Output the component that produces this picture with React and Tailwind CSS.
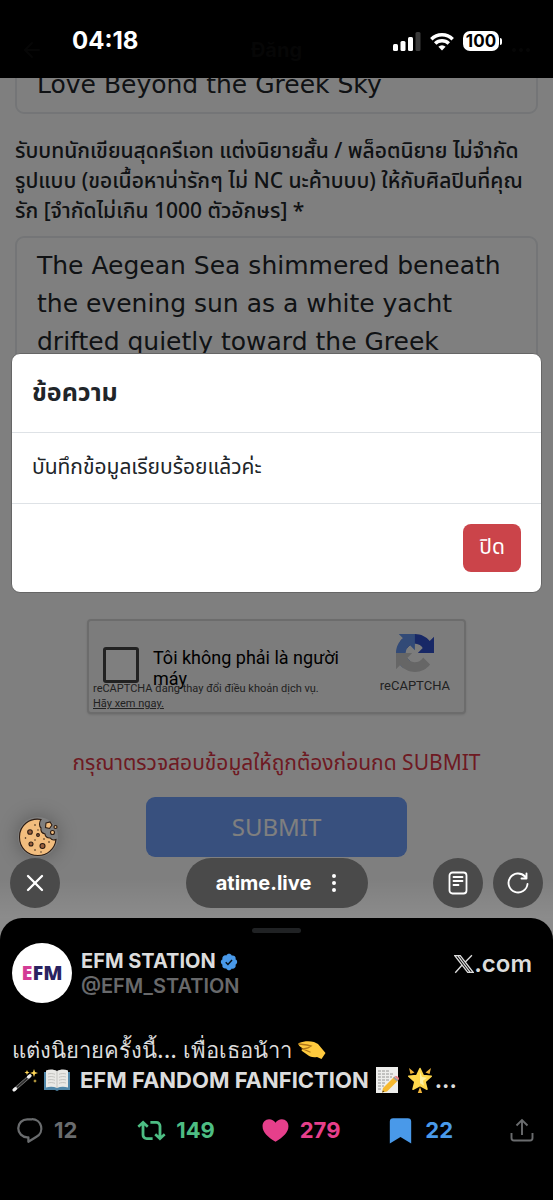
import React, { useState } from 'react';
import { ArrowLeft, MoreHorizontal, MoreVertical, X } from 'lucide-react';

const pageFont = 'font-["DejaVu_Sans","Noto_Sans",sans-serif]';
const thaiFont = 'font-["Noto_Sans_Thai","Noto_Sans","DejaVu_Sans",sans-serif]';

const StatusBar = () => (
  <header className="relative h-[78px] shrink-0 bg-black text-white">
    {/* Title bar under the status icons, nearly hidden */}
    <div className="absolute inset-x-0 top-9 flex items-center justify-between px-5 text-[#060606]">
      <ArrowLeft className="h-6 w-6" />
      <span className="text-xl font-bold">Đăng</span>
      <MoreHorizontal className="h-6 w-6" />
    </div>
    <div className="relative flex items-center justify-between pl-[72px] pr-[51px] pt-[26px]">
      <span className="text-[24px] font-bold leading-[30px]">04:18</span>
      <div className="flex items-center gap-[9px]">
        <svg viewBox="0 0 28 19" className="h-[19px] w-7" fill="currentColor">
          <rect x="0" y="12" width="5" height="7" rx="1.5" />
          <rect x="7.5" y="9" width="5" height="10" rx="1.5" />
          <rect x="15" y="5" width="5" height="14" rx="1.5" />
          <rect x="22.5" y="0" width="5" height="19" rx="1.5" fill="#3a3a3a" />
        </svg>
        <svg viewBox="0 0 24 19" className="h-[19px] w-6" fill="none" stroke="currentColor" strokeWidth="3.4">
          <path d="M1.3 7.2a15.2 15.2 0 0 1 21.4 0" />
          <path d="M5.2 11.5a9.6 9.6 0 0 1 13.6 0" />
          <path d="M12 18.6 8.4 14.8a5 5 0 0 1 7.2 0Z" fill="currentColor" stroke="none" />
        </svg>
        <div className="flex items-center gap-px">
          <span className="flex h-5 w-9 items-center justify-center rounded-[7px] bg-white text-[17px] font-bold leading-5 text-black">100</span>
          <span className="h-[7px] w-[2px] rounded-r bg-white" />
        </div>
      </div>
    </div>
  </header>
);

const RecaptchaLogo = () => (
  <svg viewBox="0 0 64 64" className="h-[38px] w-[38px]">
    <path fill="#3050cc" d="M64 31.955l-.033-1.37V4.687l-7.16 7.16C50.948 4.674 42.033.093 32.05.093c-10.4 0-19.622 4.96-25.458 12.64l11.736 11.86a15.55 15.55 0 0 1 4.754-5.334c2.05-1.6 4.952-2.906 8.968-2.906.485 0 .86.057 1.135.163 4.976.393 9.288 3.14 11.828 7.124l-8.307 8.307L64 31.953" />
    <path fill="#6494ee" d="M31.862.094l-1.37.033H4.594l7.16 7.16C4.58 13.147 0 22.06 0 32.046c0 10.4 4.96 19.622 12.64 25.458L24.5 45.768a15.55 15.55 0 0 1-5.334-4.754c-1.6-2.05-2.906-4.952-2.906-8.968 0-.485.057-.86.163-1.135.393-4.976 3.14-9.288 7.124-11.828l8.307 8.307L31.86.095" />
    <path fill="#cccccc" d="M.001 32.045l.033 1.37v25.898l7.16-7.16c5.86 7.173 14.774 11.754 24.76 11.754 10.4 0 19.622-4.96 25.458-12.64l-11.736-11.86a15.55 15.55 0 0 1-4.754 5.334c-2.05 1.6-4.952 2.906-8.968 2.906-.485 0-.86-.057-1.135-.163-4.976-.393-9.288-3.14-11.828-7.124l8.307-8.307c-10.522.04-22.4.066-27.295-.005" />
  </svg>
);

const Recaptcha = () => (
  <div className="relative mx-auto flex h-[95px] w-[379px] items-start rounded-[4px] border-2 border-[#d9d9d9] bg-[#f9f9f9] pl-[14px] pt-[26px] font-['Roboto',sans-serif] shadow">
    <input id="not-robot" type="checkbox" className="h-9 w-9 shrink-0 appearance-none rounded-[3px] border-[3px] border-[#444] bg-white" />
    <label htmlFor="not-robot" className="ml-[14px] w-[200px] text-[18px] leading-[21px] text-black">
      Tôi không phải là người máy
    </label>
    <div className="-mt-[13px] ml-auto mr-[14px] flex flex-col items-center">
      <RecaptchaLogo />
      <span className="mt-1 text-[13px] leading-5 text-[#444]">reCAPTCHA</span>
    </div>
    <p className="absolute left-1 top-[60px] text-[11px] leading-[15px] text-[#444]">
      reCAPTCHA đang thay đổi điều khoản dịch vụ.
      <br />
      <a href="#terms" className="underline">Hãy xem ngay.</a>
    </p>
  </div>
);

const FanficForm = () => (
  <form className={`flex flex-col px-[15px] text-[#212529] ${pageFont}`} onSubmit={(e) => e.preventDefault()}>
    <input
      aria-label="Title"
      defaultValue="Love Beyond the Greek Sky"
      className="-mt-6 h-[60px] w-full rounded-[9px] border-2 border-[#e8ebee] bg-white px-5 text-[25px]"
    />
    <label htmlFor="story" className={`mt-[23px] whitespace-nowrap text-[21px] font-medium leading-[30px] ${thaiFont}`}>
      รับบทนักเขียนสุดครีเอท แต่งนิยายสั้น / พล็อตนิยาย ไม่จำกัด
      <br />
      รูปแบบ (ขอเนื้อหาน่ารักๆ ไม่ NC นะค้าบบบ) ให้กับศิลปินที่คุณ
      <br />
      รัก [จำกัดไม่เกิน 1000 ตัวอักษร] *
    </label>
    <textarea
      id="story"
      defaultValue={'The Aegean Sea shimmered beneath\nthe evening sun as a white yacht\ndrifted quietly toward the Greek'}
      className="mt-[9px] h-[353px] w-full resize-none rounded-[9px] border-2 border-[#e8ebee] bg-white px-5 py-[9px] text-[25px] leading-[38px]"
    />
    <div className="mt-[30px]">
      <Recaptcha />
    </div>
    <p className={`mt-[35px] text-center text-[21px] leading-[30px] text-[#dc3545] ${thaiFont}`}>
      กรุณาตรวจสอบข้อมูลให้ถูกต้องก่อนกด SUBMIT
    </p>
    <button type="submit" className={`mx-auto mt-[18px] h-[60px] w-1/2 rounded-[9px] bg-[#70a0fc] pt-1 text-[24px] text-white ${thaiFont}`}>
      SUBMIT
    </button>
  </form>
);

const MessageDialog = ({ onClose }) => (
  <div className="absolute inset-0 flex items-center bg-black/50 px-[11px] pb-[50px]">
    <div role="dialog" aria-labelledby="dialog-title" className={`w-full rounded-[9px] border border-[#666] bg-white text-[#212529] ${thaiFont}`}>
      <h5 id="dialog-title" className="border-b border-[#dee2e6] px-5 py-[21px] text-[25px] font-bold leading-9">ข้อความ</h5>
      <p className="px-5 py-5 text-[21px] leading-[30px]">บันทึกข้อมูลเรียบร้อยแล้วค่ะ</p>
      <div className="flex justify-end border-t border-[#dee2e6] p-5">
        <button onClick={onClose} className="h-12 w-[58px] rounded-[8px] bg-[#cb444a] text-[21px] text-white">ปิด</button>
      </div>
    </div>
  </div>
);

const CookieIcon = () => (
  <svg viewBox="0 0 40 40" className="h-10 w-10" stroke="#2b1c14" strokeWidth="1.1">
    <path fill="#f2bd7e" d="M23 2.500C12 .5 1.500 8 1.500 20c0 11 8 18.500 18.500 18.500 9 0 17-6.500 18-16-2 .8-4.500.3-5.800-1.500-3 .3-5-1.500-5.200-4-3.500-1-4.500-3.500-4-6-2-2-2-6 0-8.500Z" />
    <g fill="#9a603d">
      <circle cx="12" cy="15" r="2.300" />
      <circle cx="20" cy="18" r="1.400" />
      <circle cx="13" cy="27" r="2" />
      <circle cx="24.500" cy="29" r="2.500" />
    </g>
    <g fill="#f2bd7e">
      <path d="m28 6 4-1 2 3-2.500 3.500-4-1Z" />
      <circle cx="34.500" cy="15.500" r="2" />
      <circle cx="37.500" cy="10" r="1.500" />
    </g>
    <g fill="#2b1c14" stroke="none">
      <circle cx="17" cy="8" r=".8" />
      <circle cx="20" cy="13" r=".7" />
      <circle cx="7.500" cy="21" r=".8" />
      <circle cx="17" cy="23" r=".7" />
      <circle cx="26" cy="22" r=".8" />
      <circle cx="31" cy="25" r=".8" />
      <circle cx="17" cy="33" r=".8" />
      <circle cx="23" cy="35" r=".7" />
    </g>
  </svg>
);

const roundButton = 'flex h-[50px] w-[50px] shrink-0 items-center justify-center rounded-full bg-[#4a4a4a]';

const BrowserBar = () => (
  <nav className="absolute inset-x-0 bottom-[10px] flex items-center justify-between px-[10px] text-white">
    <button aria-label="Close" className={roundButton}>
      <X className="h-7 w-7" strokeWidth={2} />
    </button>
    <button className="ml-[61px] flex h-[50px] w-[182px] items-center justify-center gap-[11px] rounded-full bg-[#4a4a4a] pl-2 text-[20px] font-bold">
      atime.live
      <MoreVertical className="h-6 w-6" strokeWidth={2} />
    </button>
    <div className="flex gap-[10px]">
      <button aria-label="Reader" className={roundButton}>
        <svg viewBox="0 0 24 24" className="h-6 w-6" fill="none" stroke="currentColor" strokeWidth="1.8" strokeLinecap="round">
          <rect x="3.500" y="1.500" width="17" height="21" rx="3" />
          <path d="M7.500 6h9M7.500 10h9M7.500 14h5" />
        </svg>
      </button>
      <button aria-label="Reload" className={roundButton}>
        <svg viewBox="0 0 24 24" className="h-6 w-6" fill="none" stroke="currentColor" strokeWidth="1.9" strokeLinecap="round" strokeLinejoin="round">
          <path d="M21.500 13A9.500 9.500 0 1 1 19 5.500l1.500 2M20.500 2.500v5h-5" />
        </svg>
      </button>
    </div>
  </nav>
);

const HandEmoji = () => (
  <svg viewBox="0 0 28 20" className="h-5 w-7">
    <path fill="#ffca3e" d="M1 3c5-2 10-2.500 15-1l4 2 7.500 9-4 6-4.500-2c-4 1-8-.5-10-2.500L4 11c-1-1 0-2.500 1.500-2L2 6.500C.5 5.500 0 3.500 1 3Z" />
    <path fill="none" stroke="#b0761a" strokeWidth="1.300" strokeLinecap="round" d="m1 4 8 1 4 1-3 2-5 1 7 3" />
  </svg>
);

const WandEmoji = () => (
  <svg viewBox="0 0 26 26" className="h-[26px] w-[26px]">
    <path stroke="#777" strokeWidth="3" strokeLinecap="round" d="M2.500 22.500 18 9" />
    <path stroke="#2c2c2c" strokeWidth="1.600" d="M5 20.300 16 10.700" />
    <path stroke="#eee" strokeWidth="3" strokeLinecap="round" d="m2 23 1.500-1.300M16.500 10l1.500-1.300" />
    <path fill="#ffd757" d="m22 2 1 3 3 1-3 1-1 3-1-3-3-1 3-1ZM15 3l.7 1.800 1.800.7-1.800.7L15 8l-.7-1.800-1.800-.7 1.800-.7ZM23 12l.5 1.500L25 14l-1.500.5L23 16l-.5-1.500L21 14l1.500-.5Z" />
  </svg>
);

const BookEmoji = () => (
  <svg viewBox="0 0 26 22" className="h-[22px] w-[26px]">
    <path fill="#4f86a8" d="M0 3h26v18H15l-2 1-2-1H0Z" />
    <path fill="#e9e9e6" d="M2 1.500c4-1.500 8-1 11 .5 3-1.500 7-2 11-.5v17c-4-1-8-.8-11 .5-3-1.300-7-1.500-11-.5Z" />
    <path fill="none" stroke="#b9b9b5" strokeWidth=".8" d="M13 2v17M4 5c2.500-.7 5-.5 7 .3M4 8c2.500-.7 5-.5 7 .3M4 11c2.500-.7 5-.5 7 .3M4 14c2.500-.7 5-.5 7 .3M15 5.300c2-.8 4.500-1 7-.3M15 8.300c2-.8 4.500-1 7-.3M15 11.300c2-.8 4.500-1 7-.3M15 14.300c2-.8 4.500-1 7-.3" />
  </svg>
);

const MemoEmoji = () => (
  <svg viewBox="0 0 26 26" className="h-[26px] w-[26px]">
    <path fill="#eeeeec" d="M1 0h22v26H1Z" />
    <path stroke="#8b8b8b" strokeWidth=".9" strokeDasharray="3 1" d="M3 4h12M3 7h16M3 10h14M3 13h11M3 16h8M3 19h6M3 22h4" />
    <path fill="#f6b92f" d="m8 21 11-11 4 3.500L12 24.500l-5 1Z" />
    <path fill="#9b9b9b" d="m18 11 1.500-1.500 4 3.500-1.500 1.500Z" />
    <path fill="#ea7f88" d="M19.500 9.500c2-2 6 1.500 4 3.500Z" />
    <path fill="#503c22" d="m7 25.500 1-2 1.500 1.300Z" />
  </svg>
);

const StarEmoji = () => (
  <svg viewBox="0 0 26 26" className="h-[26px] w-[26px]">
    <path fill="#ffd84c" stroke="#ffd84c" strokeWidth="1.500" strokeLinejoin="round" d="m13 1.500 3.300 7 8 .8-6.200 5.400 1.900 7.600L13 18.500l-7 3.800 1.900-7.600-6.200-5.400 8-.8Z" />
    <path fill="#fff1a0" d="m13 5 2 5 5 .8-4 3 1 5-4-2.500Z" />
    <path fill="#f0b43a" d="m2 1 5.500 4.500-4 1.500ZM24 1l-5.500 4.500 4 1.500ZM13 20l2.200 6h-4.400Z" />
  </svg>
);

const actions = [
  {
    label: 'Reply',
    count: '12',
    color: 'text-[#6a6c6e] mr-[14px]',
    icon: <path fill="none" stroke="currentColor" strokeWidth="2" strokeLinejoin="round" d="M10 2h4.200a8.300 8.300 0 0 1 4 15.600L11 22v-4h-1A8 8 0 0 1 10 2Z" />,
  },
  {
    label: 'Repost',
    count: '149',
    color: 'text-[#4dbd83]',
    icon: <path fill="currentColor" d="m4.500 3.100 5 4.600-1.600 1.800L5.700 7.500V16c0 1.100.9 2 2 2H13v2.500H7.700A4.500 4.500 0 0 1 3.200 16V7.500L1 9.500-.5 7.700ZM19.500 20.900l-5-4.600 1.600-1.800 2.200 2V8c0-1.100-.9-2-2-2H11V3.500h5.300A4.500 4.500 0 0 1 20.800 8v8.500l2.200-2 1.500 1.800Z" />,
  },
  {
    label: 'Like',
    count: '279',
    color: 'text-[#e63f8b]',
    icon: <path fill="currentColor" d="M12 22C5 18 .5 13.500.5 8.300.5 4.600 3 2 6.300 2 8.700 2 10.700 3.200 12 5c1.300-1.800 3.300-3 5.700-3 3.300 0 5.800 2.600 5.800 6.300C23.500 13.500 19 18 12 22Z" />,
  },
  {
    label: 'Bookmark',
    count: '22',
    color: 'text-[#4999e9]',
    icon: <path fill="currentColor" d="M2.500 4A3 3 0 0 1 5.500 1h13a3 3 0 0 1 3 3v19.500L12 17.800l-9.500 5.700Z" />,
  },
];

const PostPanel = () => (
  <section className="shrink-0 rounded-t-[22px] bg-black px-3 pb-[55px] pt-[10px] text-[#dcdcdc]">
    <div className="mx-auto h-[5px] w-[49px] rounded-full bg-[#202224]" />
    <div className="mt-[10px] flex items-start">
      <div className="flex h-[60px] w-[60px] items-center justify-center rounded-full bg-white font-['Open_Sans',sans-serif] text-[20px] font-extrabold text-[#2a2360]">
        <span className="text-[#d33c96]">E</span>FM
      </div>
      <div className="ml-[9px] pt-[6px] text-[20px] leading-[25px]">
        <h2 className="flex items-center gap-1 font-bold">
          EFM STATION
          <svg viewBox="0 0 22 22" className="h-[18px] w-[18px]">
            <path fill="#4999e9" d="M20.400 11c0-1.200-.7-2.200-1.700-2.700.4-1.100.2-2.300-.7-3.200-.8-.8-2-1-3.100-.7C14.400 3.300 13.300 2.600 12.100 2.600S9.800 3.300 9.300 4.400c-1.100-.4-2.300-.1-3.100.7-.9.9-1.100 2.100-.7 3.200-1 .5-1.700 1.500-1.700 2.700s.7 2.200 1.700 2.700c-.4 1.100-.2 2.300.7 3.200.8.800 2 1 3.100.7.500 1.100 1.600 1.800 2.800 1.800s2.300-.7 2.800-1.800c1.100.4 2.300.1 3.100-.7.900-.9 1.100-2.100.7-3.200 1-.5 1.700-1.500 1.700-2.700Z" transform="translate(-3.500 -2.200) scale(1.200)" />
            <path fill="none" stroke="#071018" strokeWidth="1.800" d="m7 11.300 2.700 2.700 5-5.500" />
          </svg>
        </h2>
        <p className="font-semibold text-[#68696b]">@EFM_STATION</p>
      </div>
      <a href="#post" className="ml-auto mr-[9px] flex items-center pt-[6px] text-[24px] font-semibold leading-[30px]">
        <svg viewBox="0 0 24 24" className="h-[20px] w-[20px]" fill="none" stroke="currentColor" strokeWidth="1.600">
          <path d="M1 2h6.500L23 22h-6.500ZM4.500 2 19.500 22M21.500 1.500 13.300 10M9.500 13.500 1.500 22.500" />
        </svg>
        .com
      </a>
    </div>
    <div className="mt-8 text-[22px] font-bold leading-[30px]">
      <p className="flex items-center gap-[6px] whitespace-nowrap font-medium">แต่งนิยายครั้งนี้... เพื่อเธอน้าา <HandEmoji /></p>
      <p className="flex items-center gap-[6px] whitespace-nowrap">
        <WandEmoji />
        <BookEmoji />
        <span className="ml-1">EFM FANDOM FANFICTION</span>
        <MemoEmoji />
        <StarEmoji />
        <span className="-ml-1">...</span>
      </p>
    </div>
    <div className="mt-5 flex items-center justify-between pl-1 pr-[7px]">
      {actions.map((action) => (
        <button key={action.label} aria-label={action.label} className={`flex items-center gap-[11px] text-[22px] font-bold leading-[30px] ${action.color}`}>
          <svg viewBox="0 0 24 24" className="h-[27px] w-[27px] overflow-visible">{action.icon}</svg>
          {action.count}
        </button>
      ))}
      <button aria-label="Share" className="ml-[10px] text-[#6a6c6e]">
        <svg viewBox="0 0 24 24" className="h-[26px] w-6" fill="none" stroke="currentColor" strokeWidth="1.900">
          <path d="M12 17V2M6.500 7.500 12 2l5.500 5.500M1.500 15v5a2.500 2.500 0 0 0 2.500 2.500h16a2.500 2.500 0 0 0 2.500-2.500v-5" />
        </svg>
      </button>
    </div>
  </section>
);

export default function App() {
  const [showMessage, setShowMessage] = useState(true);

  return (
    <div className="flex min-h-screen flex-col bg-[#8b8b8b] font-['Inter','Noto_Sans',sans-serif]">
      <StatusBar />
      <main className="relative flex-1 overflow-hidden bg-white pb-[60px]">
        <FanficForm />
        {showMessage && <MessageDialog onClose={() => setShowMessage(false)} />}
        <div className="absolute inset-x-0 bottom-0 h-10 bg-linear-to-t from-white/10 to-transparent" />
        <button aria-label="Cookie settings" className="absolute bottom-[61px] left-[18px] rounded-full shadow-[0_0_20px_rgba(0,0,0,0.3)]">
          <CookieIcon />
        </button>
        <BrowserBar />
      </main>
      <PostPanel />
    </div>
  );
}
